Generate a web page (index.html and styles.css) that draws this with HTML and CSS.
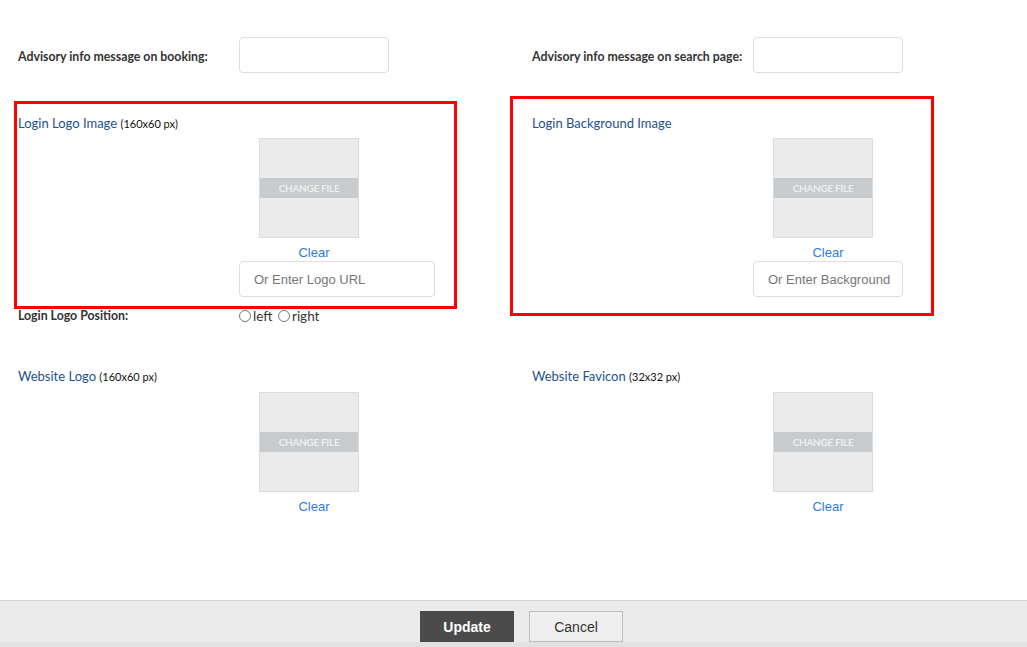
FILE: index.html
```html
<!DOCTYPE html>
<html>
<head>
    <meta charset="utf-8">
    <title>Site settings</title>
    <link rel="stylesheet" href="styles.css">
</head>
<body>
    <div class="page">
        <div class="settings">
            <div class="pair first">
                <div class="field">
                    <label class="field-label">Advisory info message on booking:</label>
                    <input type="text" class="text-input">
                </div>
                <div class="field">
                    <label class="field-label">Advisory info message on search page:</label>
                    <input type="text" class="text-input">
                </div>
            </div>

            <div class="pair uploads">
                <div class="upload">
                    <h3 class="upload-title">Login Logo Image <small>(160x60 px)</small></h3>
                    <div class="upload-body">
                        <div class="file-box">
                            <div class="thumb"><span>CHANGE FILE</span></div>
                            <a href="#" class="clear">Clear</a>
                        </div>
                        <input type="text" class="url-input wide" placeholder="Or Enter Logo URL">
                    </div>
                    <div class="field position">
                        <label class="field-label">Login Logo Position:</label>
                        <div class="radios">
                            <label><input type="radio" name="pos">left</label>
                            <label><input type="radio" name="pos">right</label>
                        </div>
                    </div>
                </div>
                <div class="upload">
                    <h3 class="upload-title">Login Background Image</h3>
                    <div class="upload-body">
                        <div class="file-box">
                            <div class="thumb"><span>CHANGE FILE</span></div>
                            <a href="#" class="clear">Clear</a>
                        </div>
                        <input type="text" class="url-input" placeholder="Or Enter Background">
                    </div>
                </div>
            </div>

            <div class="pair site">
                <div class="upload">
                    <h3 class="upload-title">Website Logo <small>(160x60 px)</small></h3>
                    <div class="upload-body">
                        <div class="file-box">
                            <div class="thumb"><span>CHANGE FILE</span></div>
                            <a href="#" class="clear">Clear</a>
                        </div>
                    </div>
                </div>
                <div class="upload">
                    <h3 class="upload-title">Website Favicon <small>(32x32 px)</small></h3>
                    <div class="upload-body">
                        <div class="file-box">
                            <div class="thumb"><span>CHANGE FILE</span></div>
                            <a href="#" class="clear">Clear</a>
                        </div>
                    </div>
                </div>
            </div>
        </div>

        <div class="footer">
            <div class="btn-row">
                <button class="btn btn-update">Update</button>
                <button class="btn btn-cancel">Cancel</button>
            </div>
        </div>
    </div>

    <!-- highlight boxes -->
    <div class="mark mark-left"></div>
    <div class="mark mark-right"></div>
</body>
</html>
```

FILE: styles.css
```css
*{
    margin: 0;
    padding: 0;
    box-sizing: border-box;
}
body{
    font-family: Lato, "Open Sans", sans-serif;
    background: #fff;
    color: #333;
}
.page{
    display: flex;
    flex-direction: column;
    height: 100vh;
    overflow: hidden;
}
.settings{
    flex: 1;
    padding-left: 18px;
}
.pair{
    display: grid;
    grid-template-columns: 514px 1fr;
}
.pair.first{
    margin-top: 37px;
}
.field{
    display: grid;
    grid-template-columns: 221px 1fr;
    align-items: center;
}
.field-label{
    font-size: 12.3px;
    font-weight: bold;
    color: #333;
}
.first .field-label{
    padding-top: 2px;
}
.text-input{
    width: 150px;
    height: 36px;
    border: 1px solid #ddd;
    border-radius: 4px;
    outline: none;
}

/* upload blocks */
.uploads{
    margin-top: 42px;
}
.site{
    margin-top: 44px;
}
.upload-title{
    height: 16px;
    font-size: 13px;
    font-weight: normal;
    line-height: 16px;
    color: #1d5290;
}
.upload-title small{
    font-size: 11px;
    color: #111;
}
.upload-body{
    padding-left: 221px;
}
.file-box{
    width: 150px;
    margin-top: 7px;
}
.site .file-box{
    margin-top: 8px;
}
.thumb{
    width: 100px;
    height: 100px;
    margin-left: 20px;
    background: #ebebeb;
    border: 1px solid #dcdcdc;
    padding-top: 39px;
}
.thumb span{
    display: block;
    height: 20px;
    line-height: 20px;
    background: #c7cbcd;
    color: #eeeeee;
    font-size: 10px;
    font-weight: bold;
    text-align: center;
    letter-spacing: -0.3px;
}
.clear{
    display: block;
    margin-top: 7px;
    text-align: center;
    font-family: "Liberation Sans", Arial, sans-serif;
    font-size: 13px;
    line-height: 16px;
    color: #2f7ae0;
    text-decoration: none;
}
.url-input{
    display: block;
    width: 150px;
    height: 36px;
    padding: 0 2px 0 14px;
    border: 1px solid #ddd;
    border-radius: 4px;
    font-family: "Liberation Sans", Arial, sans-serif;
    font-size: 13px;
    outline: none;
}
.url-input.wide{
    width: 196px;
}
.url-input::placeholder{
    color: #777;
}
.position{
    margin-top: 11px;
    line-height: 16px;
}
.radios{
    font-size: 13.5px;
    color: #333;
}
.radios label{
    margin-right: 2px;
}
.radios input{
    width: 12px;
    height: 12px;
    margin: 0 2px 0 0;
    vertical-align: -1px;
}

/* footer */
.footer{
    background: #ebebeb;
    border-top: 1px solid #d4d4d4;
    padding-top: 10px;
    border-bottom: 5px solid #e2e2e2;
}
.btn-row{
    display: flex;
    justify-content: center;
    gap: 15px;
    padding-left: 16px;
}
.btn{
    width: 94px;
    height: 31px;
    font-family: "Liberation Sans", Arial, sans-serif;
    font-size: 14px;
    cursor: pointer;
    outline: none;
}
.btn-update{
    background: #4b4b4b;
    border: 1px solid #4b4b4b;
    color: #fff;
    font-weight: bold;
}
.btn-cancel{
    background: #efefef;
    border: 1px solid #bdbdbd;
    color: #333;
}

/* red highlight boxes drawn over the form */
.mark{
    position: absolute;
    border: 3px solid #f00;
    pointer-events: none;
}
.mark-left{
    left: 14px;
    top: 101px;
    width: 443px;
    height: 208px;
}
.mark-right{
    left: 510px;
    top: 96px;
    width: 424px;
    height: 220px;
}
```
